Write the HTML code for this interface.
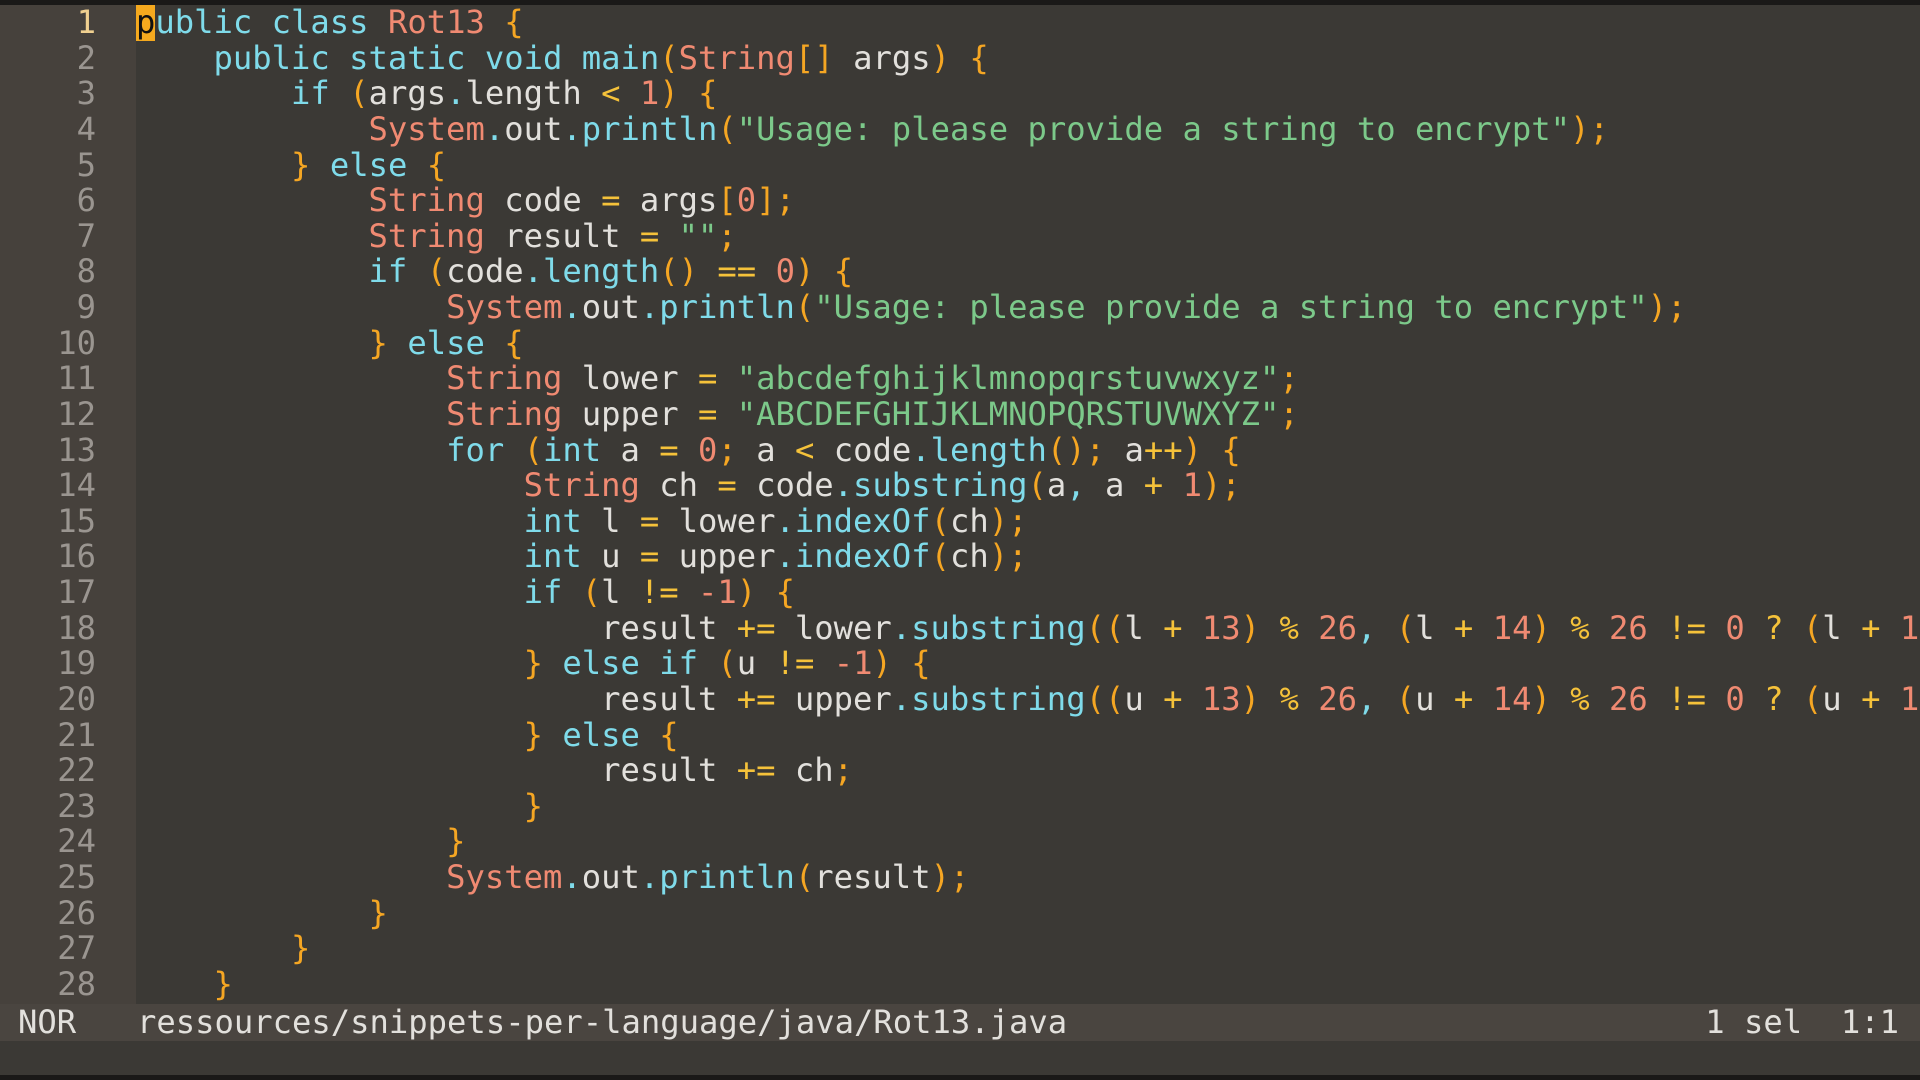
<!DOCTYPE html>
<html><head><meta charset="utf-8"><style>
html,body{margin:0;padding:0;width:1920px;height:1080px;overflow:hidden;background:#3b3935;font-family:"DejaVu Sans Mono","Liberation Mono",monospace;font-size:32.2px;}
#top{position:absolute;left:0;top:0;width:1920px;height:5px;background:#1a1918;}
#gut{position:absolute;left:0;top:5px;width:136px;height:999px;background:#46413c;}
#ed{position:absolute;left:0;top:5px;width:1920px;height:999px;overflow:hidden;}
.l{height:35.64px;line-height:35.64px;white-space:pre;position:relative;}
.n{position:absolute;left:0;width:96px;text-align:right;color:#9a9590;}
.c{position:absolute;left:136px;color:#e2e0dc;}
.cur .n{color:#f0d090;}
.k{color:#7fdbea}.t{color:#f08a72}.s{color:#7cc98a}.m{color:#f08a72}.o{color:#f5c23a}.p{color:#f5a623}.f{color:#7fdbea}
.cu{background:#f5a91e;color:#111;}
#st{position:absolute;left:0;top:1004px;width:1920px;height:37px;background:#4a4540;color:#e2e0dc;line-height:37px;white-space:pre;}
#bot{position:absolute;left:0;top:1075px;width:1920px;height:5px;background:#1a1918;}
</style></head><body>
<div id="top"></div><div id="gut"></div>
<div id="ed">
<div class="l cur"><span class="n">1</span><span class="c"><span class="cu">p</span><span class="k">ublic class</span> <span class="t">Rot13</span> <span class="p">{</span></span></div>
<div class="l"><span class="n">2</span><span class="c">    <span class="k">public static void</span> <span class="f">main</span><span class="p">(</span><span class="t">String</span><span class="p">[]</span> args<span class="p">)</span> <span class="p">{</span></span></div>
<div class="l"><span class="n">3</span><span class="c">        <span class="k">if</span> <span class="p">(</span>args<span class="f">.</span>length <span class="o">&lt;</span> <span class="m">1</span><span class="p">)</span> <span class="p">{</span></span></div>
<div class="l"><span class="n">4</span><span class="c">            <span class="t">System</span><span class="f">.</span>out<span class="f">.println</span><span class="p">(</span><span class="s">"Usage: please provide a string to encrypt"</span><span class="p">);</span></span></div>
<div class="l"><span class="n">5</span><span class="c">        <span class="p">}</span> <span class="k">else</span> <span class="p">{</span></span></div>
<div class="l"><span class="n">6</span><span class="c">            <span class="t">String</span> code <span class="o">=</span> args<span class="p">[</span><span class="m">0</span><span class="p">];</span></span></div>
<div class="l"><span class="n">7</span><span class="c">            <span class="t">String</span> result <span class="o">=</span> <span class="s">""</span><span class="p">;</span></span></div>
<div class="l"><span class="n">8</span><span class="c">            <span class="k">if</span> <span class="p">(</span>code<span class="f">.length</span><span class="p">()</span> <span class="o">==</span> <span class="m">0</span><span class="p">)</span> <span class="p">{</span></span></div>
<div class="l"><span class="n">9</span><span class="c">                <span class="t">System</span><span class="f">.</span>out<span class="f">.println</span><span class="p">(</span><span class="s">"Usage: please provide a string to encrypt"</span><span class="p">);</span></span></div>
<div class="l"><span class="n">10</span><span class="c">            <span class="p">}</span> <span class="k">else</span> <span class="p">{</span></span></div>
<div class="l"><span class="n">11</span><span class="c">                <span class="t">String</span> lower <span class="o">=</span> <span class="s">"abcdefghijklmnopqrstuvwxyz"</span><span class="p">;</span></span></div>
<div class="l"><span class="n">12</span><span class="c">                <span class="t">String</span> upper <span class="o">=</span> <span class="s">"ABCDEFGHIJKLMNOPQRSTUVWXYZ"</span><span class="p">;</span></span></div>
<div class="l"><span class="n">13</span><span class="c">                <span class="k">for</span> <span class="p">(</span><span class="k">int</span> a <span class="o">=</span> <span class="m">0</span><span class="p">;</span> a <span class="o">&lt;</span> code<span class="f">.length</span><span class="p">();</span> a<span class="o">++</span><span class="p">)</span> <span class="p">{</span></span></div>
<div class="l"><span class="n">14</span><span class="c">                    <span class="t">String</span> ch <span class="o">=</span> code<span class="f">.substring</span><span class="p">(</span>a<span class="f">,</span> a <span class="o">+</span> <span class="m">1</span><span class="p">);</span></span></div>
<div class="l"><span class="n">15</span><span class="c">                    <span class="k">int</span> l <span class="o">=</span> lower<span class="f">.indexOf</span><span class="p">(</span>ch<span class="p">);</span></span></div>
<div class="l"><span class="n">16</span><span class="c">                    <span class="k">int</span> u <span class="o">=</span> upper<span class="f">.indexOf</span><span class="p">(</span>ch<span class="p">);</span></span></div>
<div class="l"><span class="n">17</span><span class="c">                    <span class="k">if</span> <span class="p">(</span>l <span class="o">!=</span> <span class="m">-1</span><span class="p">)</span> <span class="p">{</span></span></div>
<div class="l"><span class="n">18</span><span class="c">                        result <span class="o">+=</span> lower<span class="f">.substring</span><span class="p">((</span>l <span class="o">+</span> <span class="m">13</span><span class="p">)</span> <span class="o">%</span> <span class="m">26</span><span class="f">,</span> <span class="p">(</span>l <span class="o">+</span> <span class="m">14</span><span class="p">)</span> <span class="o">%</span> <span class="m">26</span> <span class="o">!=</span> <span class="m">0</span> <span class="o">?</span> <span class="p">(</span>l <span class="o">+</span> <span class="m">14</span><span class="p">)</span> <span class="o">%</span> <span class="m">26</span> <span class="o">:</span> <span class="m">26</span><span class="p">);</span></span></div>
<div class="l"><span class="n">19</span><span class="c">                    <span class="p">}</span> <span class="k">else if</span> <span class="p">(</span>u <span class="o">!=</span> <span class="m">-1</span><span class="p">)</span> <span class="p">{</span></span></div>
<div class="l"><span class="n">20</span><span class="c">                        result <span class="o">+=</span> upper<span class="f">.substring</span><span class="p">((</span>u <span class="o">+</span> <span class="m">13</span><span class="p">)</span> <span class="o">%</span> <span class="m">26</span><span class="f">,</span> <span class="p">(</span>u <span class="o">+</span> <span class="m">14</span><span class="p">)</span> <span class="o">%</span> <span class="m">26</span> <span class="o">!=</span> <span class="m">0</span> <span class="o">?</span> <span class="p">(</span>u <span class="o">+</span> <span class="m">14</span><span class="p">)</span> <span class="o">%</span> <span class="m">26</span> <span class="o">:</span> <span class="m">26</span><span class="p">);</span></span></div>
<div class="l"><span class="n">21</span><span class="c">                    <span class="p">}</span> <span class="k">else</span> <span class="p">{</span></span></div>
<div class="l"><span class="n">22</span><span class="c">                        result <span class="o">+=</span> ch<span class="p">;</span></span></div>
<div class="l"><span class="n">23</span><span class="c">                    <span class="p">}</span></span></div>
<div class="l"><span class="n">24</span><span class="c">                <span class="p">}</span></span></div>
<div class="l"><span class="n">25</span><span class="c">                <span class="t">System</span><span class="f">.</span>out<span class="f">.println</span><span class="p">(</span>result<span class="p">);</span></span></div>
<div class="l"><span class="n">26</span><span class="c">            <span class="p">}</span></span></div>
<div class="l"><span class="n">27</span><span class="c">        <span class="p">}</span></span></div>
<div class="l"><span class="n">28</span><span class="c">    <span class="p">}</span></span></div>
</div>
<div id="st"><span style="position:absolute;left:18px">NOR</span><span style="position:absolute;left:137px">ressources/snippets-per-language/java/Rot13.java</span><span style="position:absolute;right:21px">1 sel  1:1</span></div>
<div id="bot"></div>
</body></html>
